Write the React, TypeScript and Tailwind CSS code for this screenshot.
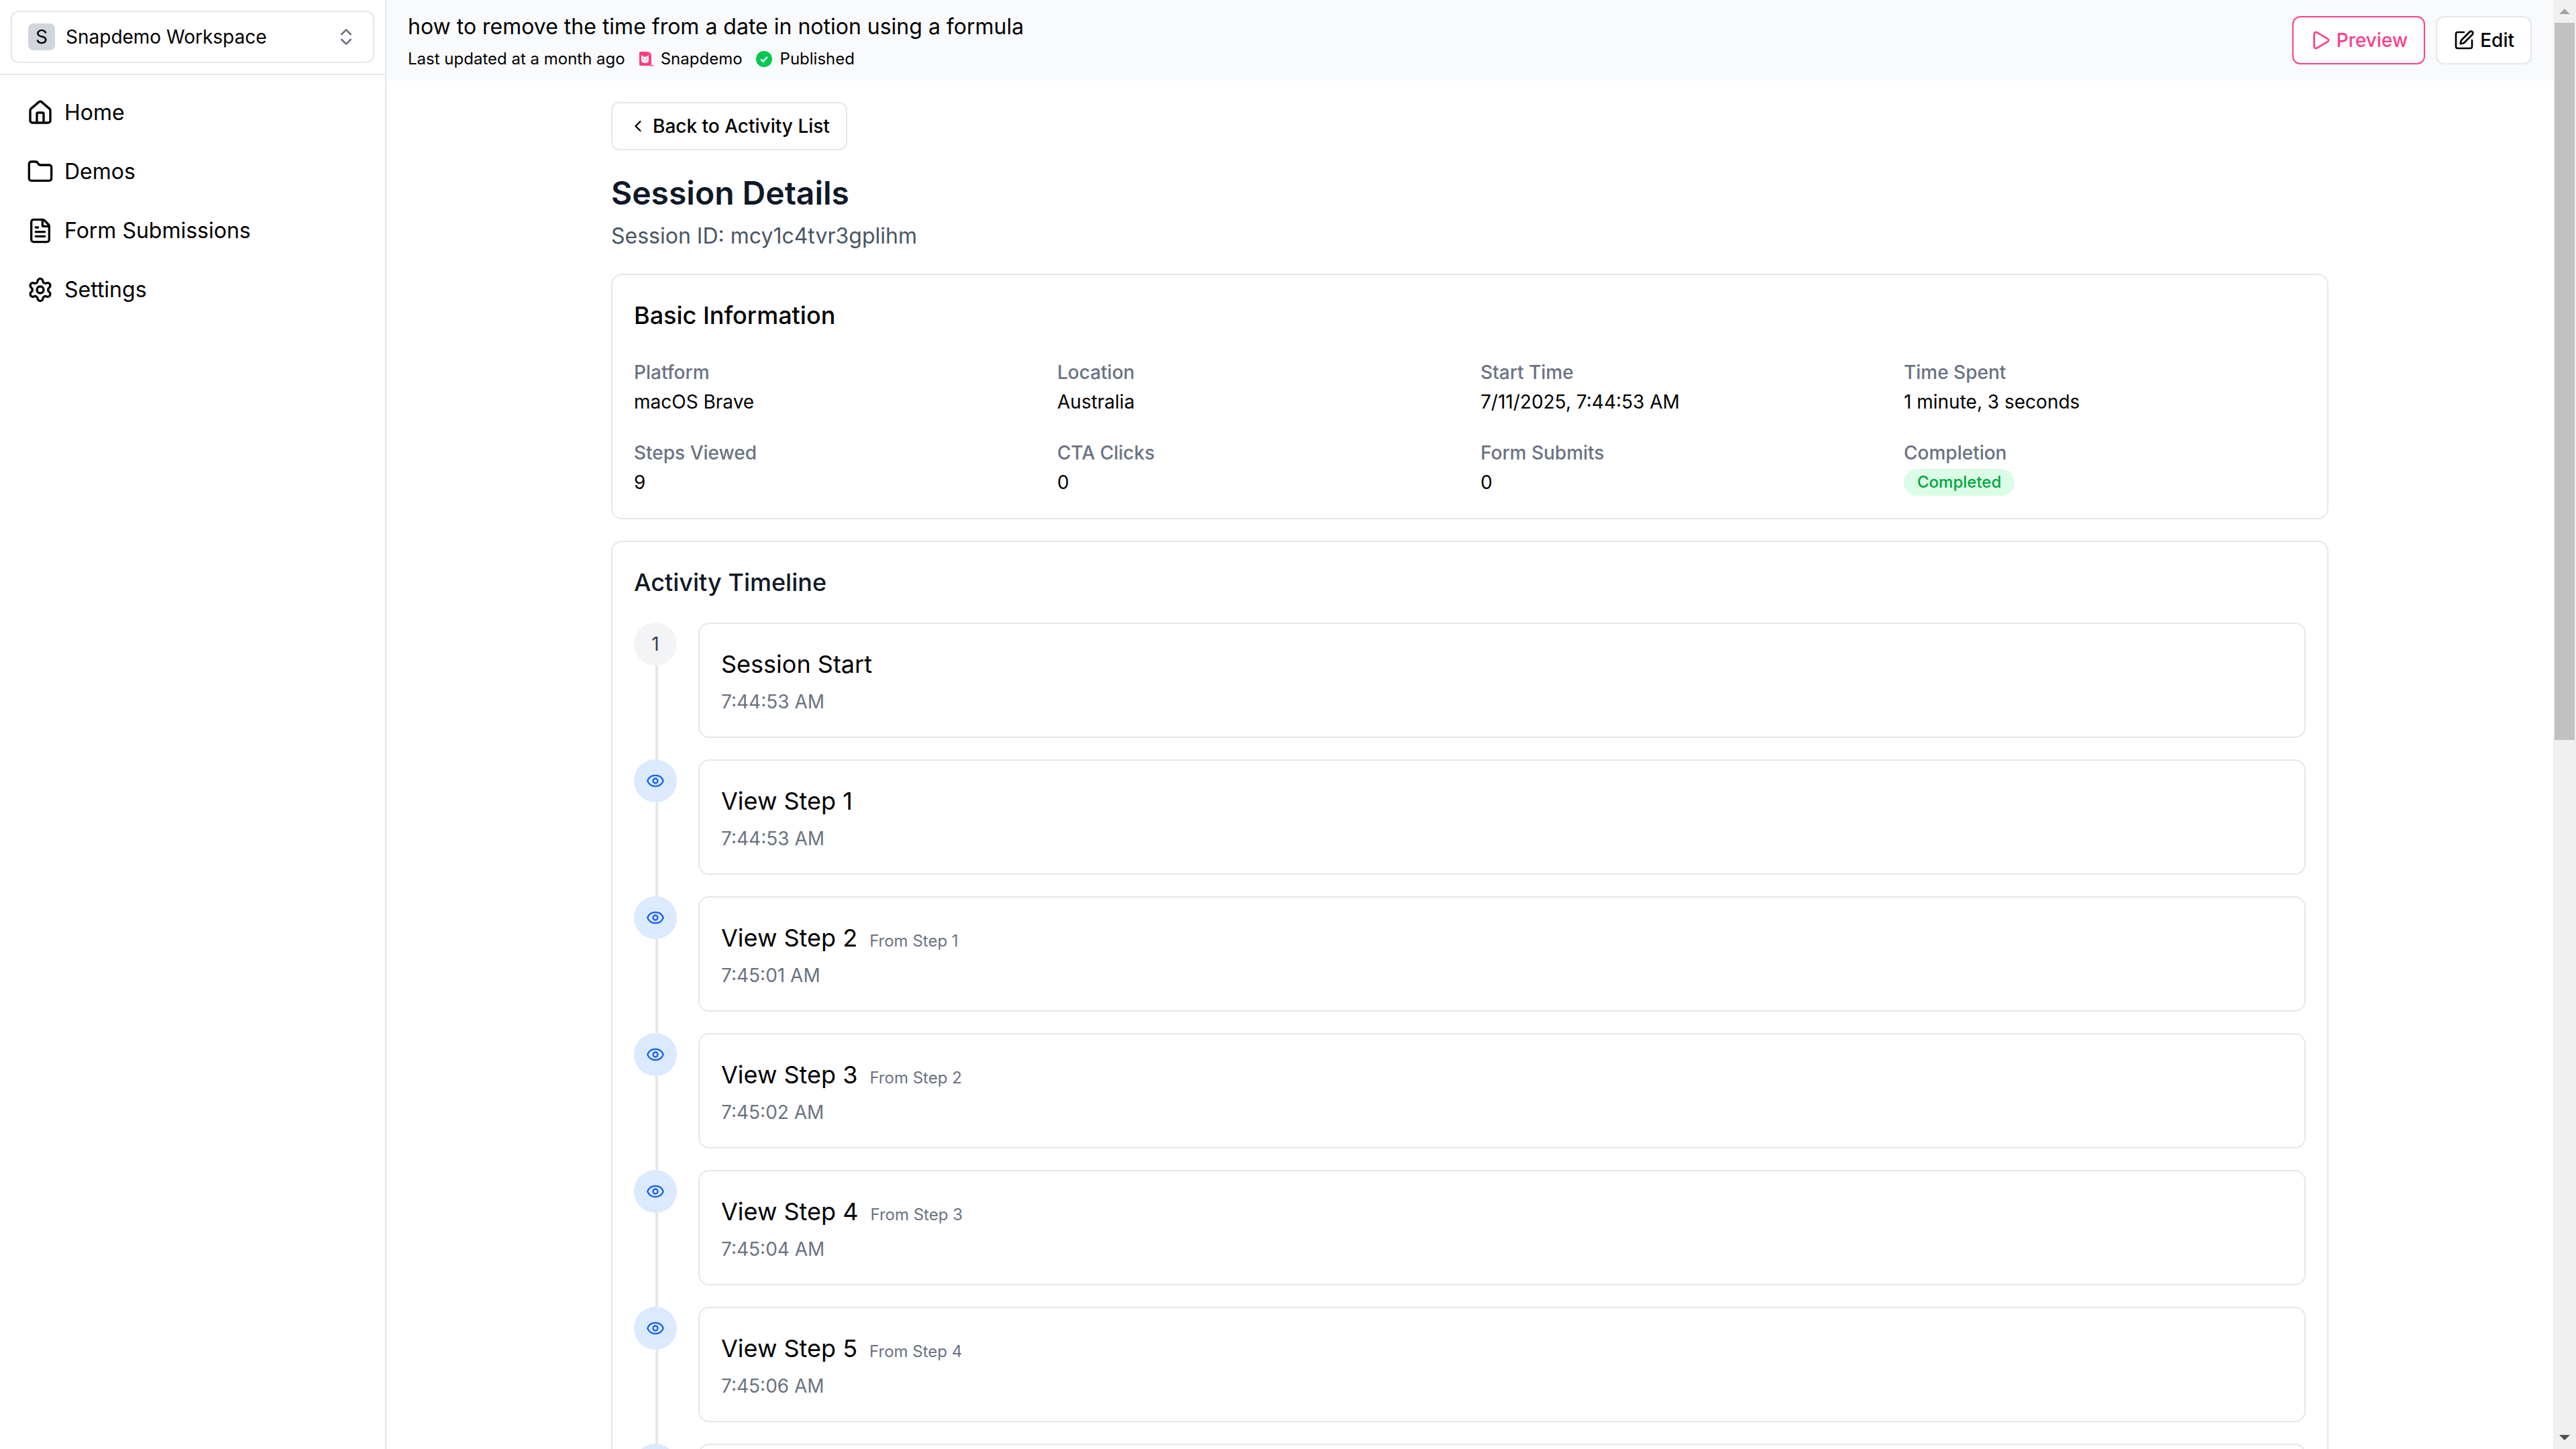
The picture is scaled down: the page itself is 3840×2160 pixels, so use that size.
import { ChevronLeft, ChevronsUpDown, Eye, FileText, Folder, Home, Play, Settings, SquarePen } from "lucide-react";

const navItems = [
  { label: "Home", icon: Home },
  { label: "Demos", icon: Folder },
  { label: "Form Submissions", icon: FileText },
  { label: "Settings", icon: Settings },
];

const infoItems = [
  { label: "Platform", value: "macOS Brave" },
  { label: "Location", value: "Australia" },
  { label: "Start Time", value: "7/11/2025, 7:44:53 AM" },
  { label: "Time Spent", value: "1 minute, 3 seconds" },
  { label: "Steps Viewed", value: "9" },
  { label: "CTA Clicks", value: "0" },
  { label: "Form Submits", value: "0" },
];

// last entry sits below the fold, only its top edge shows
const timeline: { title?: string; from?: string; time?: string }[] = [
  { title: "Session Start", time: "7:44:53 AM" },
  { title: "View Step 1", time: "7:44:53 AM" },
  { title: "View Step 2", from: "From Step 1", time: "7:45:01 AM" },
  { title: "View Step 3", from: "From Step 2", time: "7:45:02 AM" },
  { title: "View Step 4", from: "From Step 3", time: "7:45:04 AM" },
  { title: "View Step 5", from: "From Step 4", time: "7:45:06 AM" },
  {},
];

const SnapdemoLogo = () => (
  <svg viewBox="0 0 24 24" className="h-3 w-3 shrink-0">
    <path d="M4 1 H13 Q20 1 20 8 V19 Q20 22 17 22 H4 Q2 22 2 20 V3 Q2 1 4 1 Z" fill="#ff3d81" />
    <path d="M18 21 Q20 23 23 21" fill="none" stroke="#ff3d81" strokeWidth="1.6" />
    <path d="M5 6 L8 8.5 H13 L16 6 V13 Q16 18 10.5 18 Q5 18 5 13 Z" fill="#fff" />
    <circle cx="8.3" cy="12" r="0.9" fill="#ff3d81" />
    <circle cx="12.7" cy="12" r="0.9" fill="#ff3d81" />
    <circle cx="10.5" cy="14.5" r="0.6" fill="#ff3d81" />
  </svg>
);

const Sidebar = () => (
  <aside className="flex w-72 shrink-0 flex-col border-r border-gray-200 bg-white">
    <div className="h-14 border-b border-gray-200 px-2 pt-2">
      <div className="flex h-[39px] items-center justify-between rounded-md border border-gray-200 px-3">
        <div className="flex items-center gap-2">
          <span className="flex h-5 w-5 items-center justify-center rounded-sm bg-gray-300 text-sm">S</span>
          <span className="text-sm">Snapdemo Workspace</span>
        </div>
        <ChevronsUpDown className="h-4 w-4 text-gray-500" />
      </div>
    </div>
    <nav className="flex flex-col pt-1.5">
      {navItems.map((item) => (
        <div key={item.label} className="flex h-11 items-center gap-2 px-5 text-base">
          <item.icon className="h-5 w-5" />
          {item.label}
        </div>
      ))}
    </nav>
  </aside>
);

const TopBar = () => (
  <header className="flex h-[60px] shrink-0 items-center justify-between bg-gray-50 px-4">
    <div>
      <h1 className="text-base leading-6">how to remove the time from a date in notion using a formula</h1>
      <div className="mt-1 flex items-center text-xs">
        <span>Last updated at a month ago</span>
        <span className="ml-[9.5px] flex items-center gap-[5px]">
          <SnapdemoLogo />
          Snapdemo
        </span>
        <span className="ml-2.5 flex items-center gap-1.5">
          <span className="flex h-3 w-3 items-center justify-center rounded-full bg-green-500">
            <svg viewBox="0 0 12 12" className="h-3 w-3">
              <path d="M3.6 6.2 L5.3 7.8 L8.4 4.5" fill="none" stroke="#fff" strokeWidth="1.3" />
            </svg>
          </span>
          Published
        </span>
      </div>
    </div>
    <div className="flex items-center gap-2">
      <button className="flex h-9 items-center gap-1 rounded-md border border-[#ff3d8b] bg-white px-3 text-sm font-medium text-[#ff3d8b]">
        <Play className="h-4 w-4" />
        Preview
      </button>
      <button className="flex h-9 items-center gap-1 rounded-md border border-gray-200 bg-white px-3 text-sm font-medium">
        <SquarePen className="h-4 w-4" />
        Edit
      </button>
    </div>
  </header>
);

const InfoGrid = () => (
  <div className="grid grid-cols-4 gap-4">
    {infoItems.map((item) => (
      <div key={item.label}>
        <div className="text-sm leading-5 font-medium text-gray-500">{item.label}</div>
        <div className="text-sm leading-6">{item.value}</div>
      </div>
    ))}
    <div>
      <div className="text-sm leading-5 font-medium text-gray-500">Completion</div>
      <div className="flex h-6 items-center">
        <span className="rounded-full bg-green-100 px-2.5 text-xs leading-5 font-medium text-green-600">Completed</span>
      </div>
    </div>
  </div>
);

const Timeline = () => (
  <div className="flex flex-col">
    {timeline.map((item, index) => (
      <div key={index} className="flex gap-4">
        <div className="flex w-8 shrink-0 flex-col">
          {index === 0 ? (
            <div className="flex h-8 w-8 shrink-0 items-center justify-center rounded-full bg-gray-100 text-sm text-gray-700">1</div>
          ) : (
            <div className="flex h-8 w-8 shrink-0 items-center justify-center rounded-full bg-blue-100">
              <Eye className="h-3.5 w-3.5 text-blue-600" />
            </div>
          )}
          <div className="ml-4 w-0.5 flex-1 bg-gray-200" />
        </div>
        <div className="mb-4 h-[86px] min-w-0 flex-1 rounded-lg border border-gray-200 p-4">
          <div className="text-lg leading-7">
            {item.title}
            {item.from && <span className="ml-[9px] text-xs text-gray-500">{item.from}</span>}
          </div>
          {item.time && <div className="mt-1 text-sm leading-5 text-gray-500">{item.time}</div>}
        </div>
      </div>
    ))}
  </div>
);

const FakeScrollbar = () => (
  <div className="flex w-[17px] shrink-0 flex-col items-center bg-[#f0f0f0]">
    <div className="flex h-[17px] w-full shrink-0 items-center justify-center">
      <svg viewBox="0 0 8 4" className="h-1 w-2"><path d="M4 0 L8 4 H0 Z" fill="#a3a3a3" /></svg>
    </div>
    <div className="h-[534.5px] w-[15px] bg-[#c1c1c1]" />
    <div className="mt-auto flex h-[17px] w-full shrink-0 items-center justify-center">
      <svg viewBox="0 0 8 4" className="h-1 w-2"><path d="M0 0 H8 L4 4 Z" fill="#505050" /></svg>
    </div>
  </div>
);

export default function App() {
  return (
    <div className="flex h-[1080px] w-[1920px] overflow-hidden bg-white font-['Inter',sans-serif] text-black [zoom:2]">
      <Sidebar />
      <div className="flex min-w-0 flex-1 flex-col">
        <TopBar />
        <main className="min-h-0 flex-1 overflow-hidden p-4">
          <div className="mx-auto max-w-7xl">
            <button className="mb-4 flex h-9 items-center gap-1 rounded-md border border-gray-200 px-3 text-sm font-medium">
              <ChevronLeft className="h-3.5 w-3.5" />
              Back to Activity List
            </button>
            <h2 className="text-2xl font-semibold text-gray-900">Session Details</h2>
            <p className="mt-1 mb-4 text-base text-gray-600">Session ID: mcy1c4tvr3gplihm</p>
            <section className="mb-4 rounded-lg border border-gray-200 px-4 pt-4 pb-[14.5px]">
              <h3 className="mb-[18.5px] text-lg font-medium">Basic Information</h3>
              <InfoGrid />
            </section>
            <section className="rounded-lg border border-gray-200 p-4">
              <h3 className="mb-4 text-lg font-medium text-gray-900">Activity Timeline</h3>
              <Timeline />
            </section>
          </div>
        </main>
      </div>
      <FakeScrollbar />
    </div>
  );
}
